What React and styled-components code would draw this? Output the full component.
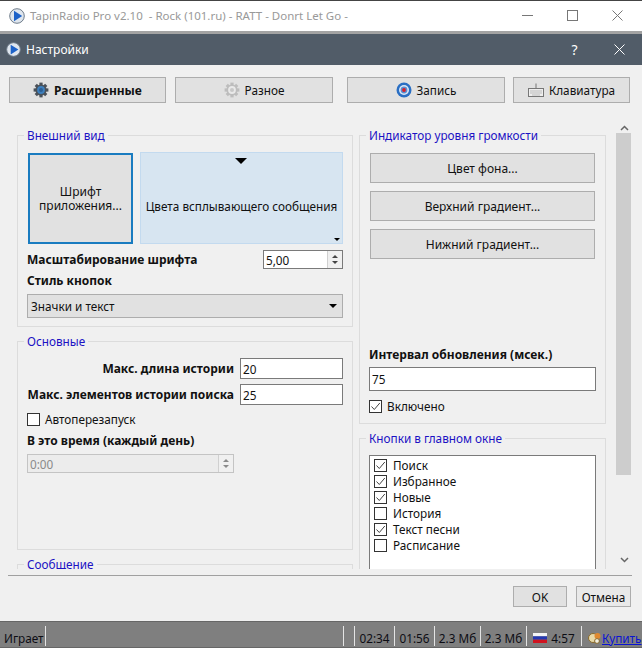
import React from 'react';
import styled, { createGlobalStyle } from 'styled-components';

const GlobalStyle = createGlobalStyle`
  html, body {
    margin: 0;
    height: 648px;
    overflow: hidden;
    background: #f0f0f0;
  }
  body, button, input, select {
    font-family: "Noto Sans", "Liberation Sans", sans-serif;
    font-size: 11.75px;
    color: #111;
  }
`;

const Window = styled.div`
  width: 642px;
  height: 648px;
  display: flex;
  flex-direction: column;
  overflow: hidden;
`;

const AppTitleBar = styled.div`
  height: 29px;
  flex: none;
  display: flex;
  align-items: center;
  padding: 0 2px 1px 9px;
  background: #fff;
  border-top: 1px solid #444;
  border-bottom: 3px solid #a3a3a3;
  color: #999;
`;

const TitleText = styled.span`
  margin-left: 5px;
  flex: 1;
  white-space: pre;
  font-size: 11.5px;
`;

const WinButton = styled.span`
  width: 45px;
  height: 30px;
  display: flex;
  align-items: center;
  justify-content: center;
`;

const DialogBar = styled.div`
  height: 31px;
  flex: none;
  display: flex;
  align-items: center;
  padding-left: 6px;
  background: #515c68;
  color: #fff;
`;

const DialogTitle = styled.span`
  margin-left: 5px;
  flex: 1;
  font-size: 12px;
`;

const HelpMark = styled.span`
  width: 45px;
  text-align: center;
  font-size: 14px;
`;

const Tabs = styled.div`
  flex: none;
  display: flex;
  padding: 12px 0 0 9px;
`;

const Tab = styled.button`
  width: ${p => p.$width}px;
  height: 26px;
  margin-left: ${p => p.$gap || 0}px;
  padding: 0;
  display: flex;
  align-items: center;
  justify-content: center;
  gap: 5px;
  background: #e1e1e1;
  border: 1px solid #adadad;
  font-weight: ${p => (p.$active ? 700 : 400)};
  font-size: ${p => (p.$active ? 12 : 11.75)}px;
`;

const ScrollArea = styled.div`
  flex: none;
  height: 454px;
  margin: 12px 10px 0 8px;
  padding-bottom: 6px;
  display: flex;
  border-bottom: 1px solid #a0a0a0;
`;

const Columns = styled.div`
  flex: 1;
  height: 454px;
  box-sizing: border-box;
  overflow: hidden;
  display: grid;
  grid-template-columns: 336px 247px;
  column-gap: 6px;
  align-content: start;
  padding: 12px 0 0 9px;
`;

const Column = styled.div`
  display: flex;
  flex-direction: column;
  gap: 6px;
`;

const Group = styled.fieldset`
  margin: 0;
  min-width: 0;
  padding: 10px 9px 8px 9px;
  height: ${p => p.$height}px;
  box-sizing: border-box;
  border: 1px solid #dcdcdc;
  flex: none;
`;

const Legend = styled.legend`
  margin-left: -3px;
  padding: 0 3px;
  color: #1c12c4;
  line-height: 16px;
`;

const ScrollBar = styled.div`
  flex: none;
  width: 16px;
  margin-left: 10px;
  display: flex;
  flex-direction: column;
  align-items: center;
`;

const ScrollArrow = styled.svg`
  flex: none;
  margin: ${p => p.$margin};
`;

const ScrollThumb = styled.div`
  width: 15px;
  height: 342px;
  align-self: flex-start;
  background: #cdcdcd;
`;

const ScrollGap = styled.div`
  flex: 1;
`;

const FontRow = styled.div`
  display: flex;
  gap: 7px;
  height: 91px;
  margin-left: 1px;
`;

const FontButton = styled.button`
  width: 105px;
  flex: none;
  padding: 0;
  background: #e1e1e1;
  border: 2px solid #1a7cc0;
  font-size: 12px;
  line-height: 14px;
`;

const ColorPanel = styled.div`
  position: relative;
  flex: 1;
  display: flex;
  align-items: center;
  justify-content: center;
  box-sizing: border-box;
  margin-top: -1px;
  padding-top: 16px;
  background: #d7e5f1;
  border: 1px solid #c3daef;
`;

const PanelTriangle = styled.span`
  position: absolute;
  top: 5px;
  left: 94px;
  border-left: 6px solid transparent;
  border-right: 6px solid transparent;
  border-top: 6px solid #000;
`;

const CornerTriangle = styled.span`
  position: absolute;
  right: 2px;
  bottom: 2px;
  border-left: 3px solid transparent;
  border-right: 3px solid transparent;
  border-top: 3px solid #000;
`;

const ScaleRow = styled.div`
  display: flex;
  align-items: center;
  justify-content: space-between;
  margin-top: 6px;
`;

const BoldLabel = styled.div`
  font-size: 12px;
  font-weight: 700;
  line-height: 16px;
  text-align: ${p => p.$align || 'left'};
  margin-top: ${p => p.$top || 0}px;
  margin-bottom: ${p => p.$bottom || 0}px;
`;

const Spin = styled.div`
  width: ${p => p.$width}px;
  height: 19px;
  box-sizing: border-box;
  display: flex;
  align-items: center;
  padding-left: 2px;
  background: ${p => (p.$disabled ? '#ececec' : '#fff')};
  color: ${p => (p.$disabled ? '#8a8a8a' : '#111')};
  border: 1px solid ${p => (p.$disabled ? '#c4c4c4' : '#7a7a7a')};
`;

const SpinValue = styled.span`
  flex: 1;
`;

const SpinButtons = styled.span`
  width: 14px;
  height: 100%;
  flex: none;
  display: flex;
  flex-direction: column;
  align-items: center;
  justify-content: center;
  gap: 3px;
  background: #f0f0f0;
  border-left: 1px solid #d0d0d0;
`;

const SpinUp = styled.i`
  border-left: 3px solid transparent;
  border-right: 3px solid transparent;
  border-bottom: 3px solid ${p => (p.$disabled ? '#8a8a8a' : '#444')};
`;

const SpinDown = styled.i`
  border-left: 3px solid transparent;
  border-right: 3px solid transparent;
  border-top: 3px solid ${p => (p.$disabled ? '#8a8a8a' : '#444')};
`;

const Select = styled.div`
  height: 24px;
  margin-top: 5px;
  box-sizing: border-box;
  display: flex;
  align-items: center;
  justify-content: space-between;
  padding: 0 5px 0 3px;
  background: #e1e1e1;
  border: 1px solid #adadad;
`;

const SelectArrow = styled.span`
  border-left: 4px solid transparent;
  border-right: 4px solid transparent;
  border-top: 4px solid #000;
`;

const FieldRow = styled.div`
  display: grid;
  grid-template-columns: 207px 103px;
  column-gap: 6px;
  align-items: center;
  margin-top: ${p => p.$top || 0}px;
`;

const TextBox = styled.input`
  display: block;
  height: ${p => (p.$full ? 24 : 21)}px;
  width: ${p => (p.$full ? '100%' : 'auto')};
  box-sizing: border-box;
  min-width: 0;
  padding: 0 2px;
  background: #fff;
  border: 1px solid #7a7a7a;
  border-radius: 0;
  outline: none;
`;

const CheckRow = styled.div`
  display: flex;
  align-items: center;
  gap: ${p => p.$gap || 5}px;
  height: 16px;
  margin-top: ${p => p.$top || 0}px;
`;

const CheckBox = styled.span`
  width: 13px;
  height: 13px;
  box-sizing: border-box;
  flex: none;
  display: flex;
  align-items: center;
  justify-content: center;
  background: #fff;
  border: 1px solid #333;
`;

const WideButton = styled.button`
  display: block;
  width: 225px;
  height: 30px;
  padding: 0;
  margin: 0 0 8px 1px;
  background: #e1e1e1;
  border: 1px solid #adadad;
  font-size: 12px;
`;

const ListBox = styled.div`
  height: 140px;
  margin-top: -1px;
  box-sizing: border-box;
  padding: 1px 4px;
  background: #fff;
  border: 1px solid #7a7a7a;
`;

const Footer = styled.div`
  flex: 1;
  display: flex;
  justify-content: flex-end;
  align-items: flex-start;
  gap: 9px;
  padding: 10px 11px 0 0;
`;

const FooterButton = styled.button`
  width: ${p => p.$width}px;
  height: 21px;
  padding: 0;
  background: ${p => (p.$primary ? '#e1e1e1' : '#e9e9e9')};
  border: 1px solid #adadad;
`;

const StatusBar = styled.div`
  height: 27px;
  flex: none;
  box-sizing: border-box;
  display: flex;
  align-items: flex-end;
  padding: 4px 0 1px 0;
  background: #7f7f7f;
  border-top: 1px solid #666;
  border-bottom: 1px solid #666;
`;

const StatusCell = styled.div`
  width: ${p => p.$width}px;
  height: 100%;
  flex: none;
  box-sizing: border-box;
  display: flex;
  align-items: center;
  justify-content: ${p => (p.$left ? 'flex-start' : 'center')};
  gap: 4px;
  padding-left: ${p => p.$left || 0}px;
  padding-top: 3px;
  color: #0d0d14;
  border-right: ${p => (p.$last ? 'none' : '1px solid #e4e4e4')};
`;

const BuyLink = styled.a`
  color: #0a14d2;
  text-decoration: underline;
  margin-left: -3px;
`;

const AppLogo = ({ size = 16 }) => (
  <svg width={size} height={size} viewBox="0 0 16 16">
    <circle cx="8" cy="8" r="7.3" fill="#dfe6ee" stroke="#6f7c8a" />
    <path d="M5 2.8 13.2 8 5 13.2Z" fill="#1d62c8" />
  </svg>
);

const GearIcon = ({ color, ring, hub }) => (
  <svg width="16" height="16" viewBox="0 0 16 16">
    <g fill={color}>
      {[0, 45, 90, 135].map(angle => (
        <rect key={angle} x="6.4" y="0.6" width="3.2" height="14.8" transform={`rotate(${angle} 8 8)`} />
      ))}
      <circle cx="8" cy="8" r="5.6" />
    </g>
    <circle cx="8" cy="8" r="3.9" fill={ring} />
    <circle cx="8" cy="8" r="2" fill={hub} />
  </svg>
);

const RecordIcon = () => (
  <svg width="16" height="16" viewBox="0 0 16 16">
    <circle cx="8" cy="8" r="7.5" fill="#2a6fc4" />
    <circle cx="8" cy="8" r="5" fill="#dbe7f5" />
    <circle cx="8" cy="8" r="3.4" fill="#5b8fd0" />
    <circle cx="8" cy="8" r="1.9" fill="#d8202c" />
  </svg>
);

const KeyboardIcon = () => (
  <svg width="16" height="15" viewBox="0 0 16 15" fill="none">
    <path d="M8 .5v5" stroke="#777" />
    <rect x=".5" y="5.5" width="15" height="8" fill="#eee" stroke="#777" />
    <path d="M2 8h12M2 10h12M4 12h8" stroke="#bbb" />
  </svg>
);

const Tick = () => (
  <svg width="11" height="11" viewBox="0 0 11 11" fill="none">
    <path d="M1.5 5.5 4.3 8.5 9.800 2" stroke="#444" />
  </svg>
);

const FlagIcon = () => (
  <svg width="14" height="10" viewBox="0 0 14 10">
    <rect width="14" height="3.4" fill="#f4f4f4" />
    <rect y="3.3" width="14" height="3.4" fill="#2438b0" />
    <rect y="6.7" width="14" height="3.3" fill="#d01420" />
  </svg>
);

const CoinsIcon = () => (
  <svg width="13" height="12" viewBox="0 0 13 12">
    <circle cx="5" cy="6" r="4.5" fill="#e8d9a8" stroke="#8a6a2a" />
    <circle cx="9.5" cy="4" r="3" fill="#e08a30" />
    <circle cx="9" cy="9" r="2.4" fill="#f2f0e2" stroke="#8a6a2a" />
  </svg>
);

const Check = ({ checked, top, gap, children }) => (
  <CheckRow $top={top} $gap={gap}>
    <CheckBox>{checked && <Tick />}</CheckBox>
    {children}
  </CheckRow>
);

const listItems = [
  ['Поиск', true],
  ['Избранное', true],
  ['Новые', true],
  ['История', false],
  ['Текст песни', true],
  ['Расписание', false],
];

export default function App() {
  return (
    <Window>
      <GlobalStyle />
      <AppTitleBar>
        <AppLogo />
        <TitleText>TapinRadio Pro v2.10  - Rock (101.ru) - RATT - Donrt Let Go -</TitleText>
        <WinButton>
          <svg width="11" height="11" fill="none"><path d="M0 5.500h11" stroke="#777" /></svg>
        </WinButton>
        <WinButton>
          <svg width="11" height="11" fill="none"><rect x=".5" y=".5" width="10" height="10" stroke="#777" /></svg>
        </WinButton>
        <WinButton>
          <svg width="11" height="11" fill="none"><path d="M.5.5l10 10M10.500.5l-10 10" stroke="#777" /></svg>
        </WinButton>
      </AppTitleBar>

      <DialogBar>
        <AppLogo size={15} />
        <DialogTitle>Настройки</DialogTitle>
        <HelpMark>?</HelpMark>
        <WinButton>
          <svg width="11" height="11" fill="none"><path d="M.5.5l10 10M10.500.5l-10 10" stroke="#fff" /></svg>
        </WinButton>
      </DialogBar>

      <Tabs>
        <Tab $width={157} $active><GearIcon color="#4a5159" ring="#3d7fbd" hub="#2c5f94" />Расширенные</Tab>
        <Tab $width={158} $gap={9}><GearIcon color="#bdbdbd" ring="#e9e9e9" hub="#c8c8c8" />Разное</Tab>
        <Tab $width={158} $gap={14}><RecordIcon />Запись</Tab>
        <Tab $width={117} $gap={8}><KeyboardIcon />Клавиатура</Tab>
      </Tabs>

      <ScrollArea>
        <Columns>
          <Column>
            <Group $height={200}>
              <Legend>Внешний вид</Legend>
              <FontRow>
                <FontButton>Шрифт<br />приложения...</FontButton>
                <ColorPanel>
                  <PanelTriangle />
                  Цвета всплывающего сообщения
                  <CornerTriangle />
                </ColorPanel>
              </FontRow>
              <ScaleRow>
                <BoldLabel>Масштабирование шрифта</BoldLabel>
                <Spin $width={80}>
                  <SpinValue>5,00</SpinValue>
                  <SpinButtons><SpinUp /><SpinDown /></SpinButtons>
                </Spin>
              </ScaleRow>
              <BoldLabel $top={4}>Стиль кнопок</BoldLabel>
              <Select>
                Значки и текст
                <SelectArrow />
              </Select>
            </Group>
            <Group $height={217}>
              <Legend>Основные</Legend>
              <FieldRow $top={-1}>
                <BoldLabel $align="right">Макс. длина истории</BoldLabel>
                <TextBox defaultValue="20" />
              </FieldRow>
              <FieldRow $top={5}>
                <BoldLabel $align="right">Макс. элементов истории поиска</BoldLabel>
                <TextBox defaultValue="25" />
              </FieldRow>
              <Check top={6}>Автоперезапуск</Check>
              <BoldLabel $top={6} $bottom={5}>В это время (каждый день)</BoldLabel>
              <Spin $width={207} $disabled>
                <SpinValue>0:00</SpinValue>
                <SpinButtons><SpinUp $disabled /><SpinDown $disabled /></SpinButtons>
              </Spin>
            </Group>
            <Group $height={60}>
              <Legend>Сообщение</Legend>
            </Group>
          </Column>
          <Column>
            <Group $height={297}>
              <Legend>Индикатор уровня громкости</Legend>
              <WideButton>Цвет фона...</WideButton>
              <WideButton>Верхний градиент...</WideButton>
              <WideButton>Нижний градиент...</WideButton>
              <BoldLabel $top={88} $bottom={4}>Интервал обновления (мсек.)</BoldLabel>
              <TextBox $full defaultValue="75" />
              <Check top={7} checked>Включено</Check>
            </Group>
            <Group $height={160}>
              <Legend>Кнопки в главном окне</Legend>
              <ListBox>
                {listItems.map(([label, checked]) => (
                  <Check key={label} checked={checked} gap={6}>{label}</Check>
                ))}
              </ListBox>
            </Group>
          </Column>
        </Columns>
        <ScrollBar>
          <ScrollArrow $margin="10px 0 2px" width="9" height="6" fill="none">
            <path d="M1 5l3.500-3.500L8 5" stroke="#666" strokeWidth="1.500" />
          </ScrollArrow>
          <ScrollThumb />
          <ScrollGap />
          <ScrollArrow $margin="0 0 6px" width="9" height="6" fill="none">
            <path d="M1 1l3.500 3.500L8 1" stroke="#666" strokeWidth="1.500" />
          </ScrollArrow>
        </ScrollBar>
      </ScrollArea>

      <Footer>
        <FooterButton $width={54} $primary>OK</FooterButton>
        <FooterButton $width={55}>Отмена</FooterButton>
      </Footer>

      <StatusBar>
        <StatusCell $width={46} $left={4}>Играет</StatusCell>
        <StatusCell $width={298} />
        <StatusCell $width={11} />
        <StatusCell $width={40}>02:34</StatusCell>
        <StatusCell $width={40}>01:56</StatusCell>
        <StatusCell $width={46}>2.3 Мб</StatusCell>
        <StatusCell $width={46}>2.3 Мб</StatusCell>
        <StatusCell $width={55}><FlagIcon />4:57</StatusCell>
        <StatusCell $width={60} $left={6} $last><CoinsIcon /><BuyLink href="#">Купить</BuyLink></StatusCell>
      </StatusBar>
    </Window>
  );
}
